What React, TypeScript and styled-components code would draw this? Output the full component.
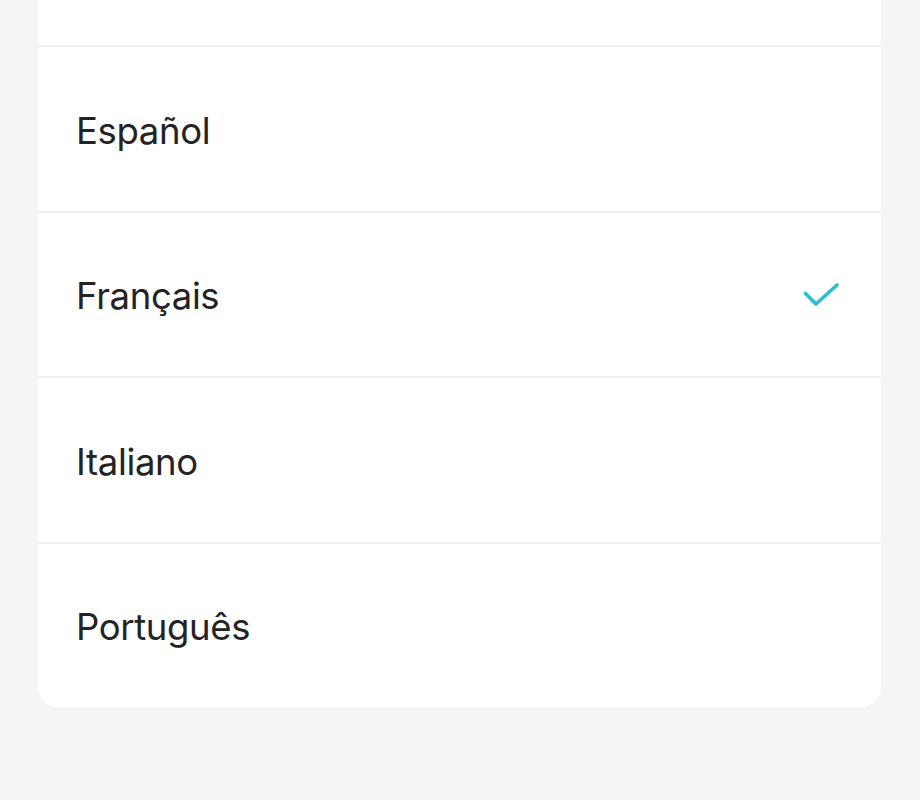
import React from "react";
import styled, { createGlobalStyle } from "styled-components";

const Global = createGlobalStyle`
  html, body {
    margin: 0;
    padding: 0;
    background: #f4f6f5;
    font-family: Inter, "Noto Sans", "Liberation Sans", sans-serif;
    -webkit-font-smoothing: antialiased;
  }
  body { overflow: hidden; }
`;

const Page = styled.div`
  width: 920px;
  height: 800px;
  background: #f4f6f5;
  padding: 0 39px 0 38px;
  box-sizing: border-box;
  overflow: hidden;
`;

const Card = styled.ul`
  list-style: none;
  margin: -118px 0 0 0;
  padding: 0;
  background: #ffffff;
  border-radius: 20px;
  overflow: hidden;
`;

const Row = styled.li<{ $last?: boolean }>`
  height: ${(p) => (p.$last ? "163px" : "165.4px")};
  box-sizing: border-box;
  display: flex;
  align-items: center;
  justify-content: space-between;
  padding: 0 42px 0 38px;
  border-bottom: ${(p) => (p.$last ? "none" : "2px solid #efefef")};
`;

const Label = styled.span`
  font-size: 36.5px;
  font-weight: 400;
  color: #232323;
  letter-spacing: -0.35px;
  padding-top: 4px;
`;

const Check = styled.svg`
  width: 36px;
  height: 32px;
  display: block;
`;

const languages = [
  { name: "", selected: false },
  { name: "Español", selected: false },
  { name: "Français", selected: true },
  { name: "Italiano", selected: false },
  { name: "Português", selected: false },
];

export default function App() {
  return (
    <>
      <Global />
      <Page>
        <Card>
          {languages.map((l, i) => (
            <Row key={i} $last={i === languages.length - 1}>
              {l.name && <Label>{l.name}</Label>}
              {l.selected && (
                <Check viewBox="0 0 36 32" fill="none">
                  <path
                    d="M2.5 15.5 L13 26 L34 7"
                    stroke="#2bbfcb"
                    strokeWidth="3.6"
                    strokeLinecap="round"
                    strokeLinejoin="round"
                  />
                </Check>
              )}
            </Row>
          ))}
        </Card>
      </Page>
    </>
  );
}
